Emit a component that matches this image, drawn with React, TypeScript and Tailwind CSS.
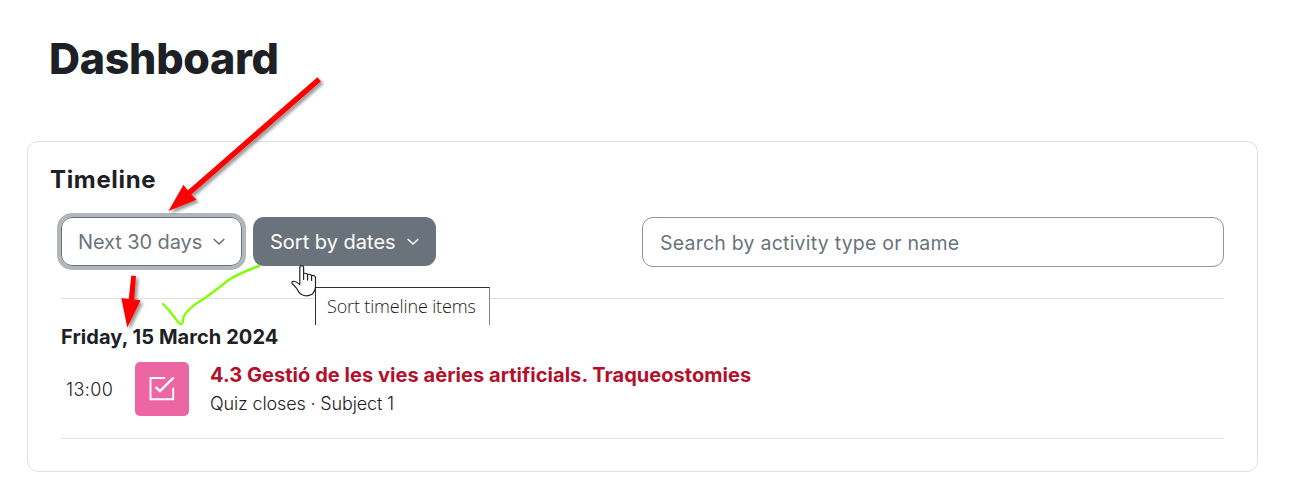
import React from 'react';

const Chevron: React.FC = () => (
  <svg width="12" height="8" viewBox="0 0 12 8" fill="none" stroke="currentColor" strokeWidth="1.7">
    <path d="M1.2 1.500l4.800 4.500 4.800-4.500" strokeLinecap="round" strokeLinejoin="round" />
  </svg>
);

const QuizIcon: React.FC = () => (
  <svg width="26" height="26" viewBox="0 0 26 26" fill="none" stroke="white" strokeWidth="1.9" strokeLinecap="round">
    <path d="M15.500 2H1.500v21.300h22.700V12.500" />
    <path d="M7.200 11.700l3.800 3.500L24 2.200" strokeWidth="2.400" />
  </svg>
);

const Annotations: React.FC = () => (
  <svg className="absolute inset-0 pointer-events-none" width="1313" height="487" viewBox="0 0 1313 487" fill="none">
    <defs>
      <filter id="shadow" x="-20%" y="-20%" width="150%" height="150%">
        <feDropShadow dx="2.5" dy="2.5" stdDeviation="1.7" floodColor="#000" floodOpacity="0.4" />
      </filter>
    </defs>
    <path
      d="M163 304L168 309L179 323.300Q181 325.500 182.700 322.500Q183 316 186 313Q194 304 202 300L212 293L230 279Q240 273 259 266"
      stroke="#80ff00"
      strokeWidth="2.4"
      strokeLinecap="round"
      strokeLinejoin="round"
    />
    <g fill="#ff0000" filter="url(#shadow)">
      <path d="M317.400 77.200L321 81.200 191.300 194.500 196.500 199.800 168.500 211 183.500 184.800 187.700 190.500z" />
      <path d="M131.300 275.500L136 276 134.200 299.500 140.700 300.300 127.300 327.500 121.300 298 128.700 299z" />
    </g>
  </svg>
);

const Cursor: React.FC = () => (
  <svg className="absolute left-[290px] top-[264px]" width="27" height="34" viewBox="0 0 27 34" fill="white" stroke="#22222c" strokeWidth="1.2" strokeLinejoin="round" strokeLinecap="round">
    <path d="M9.800 20.500V3.500a1.900 1.900 0 0 1 3.800 0V9.500q2.500-.8 4 1 2.500-.8 4 1 2.800-.4 3.900 1.700V22q0 5-3.500 8.200-5 3-10.500.3-3-2-4.500-5.500-1.500-2.500-4.500-5-1.500-2 .5-2.700 2.300-.5 6.800 3.200z" />
    <path d="M13.600 9.500v6M17.600 10.500v5.500M21.600 11.500v5" />
  </svg>
);

const App: React.FC = () => {
  return (
    <div className="relative h-[487px] w-[1313px] overflow-hidden bg-white pt-[31px] pl-[27px] font-['Inter',sans-serif] text-[#1d2125]">
      <h1 className="ml-[22px] text-[43px] leading-[54px] font-extrabold tracking-[-0.3px]">Dashboard</h1>

      <section className="mt-[56px] h-[331px] w-[1231px] rounded-[11px] border border-[#dee0e3] pt-[22px] pr-[33px] pl-[33px]">
        <h2 className="-ml-[11px] text-[24px] leading-[32px] font-bold tracking-[0.65px]">Timeline</h2>

        <div className="mt-[21px] flex h-[50px] items-start justify-between">
          <div className="flex gap-[11px] text-[20px] whitespace-nowrap">
            <button className="flex h-[49px] w-[181px] items-center justify-between rounded-[11px] border border-[#6a737b] pr-[16px] pl-[16px] tracking-[-0.1px] text-[#6a737b] shadow-[0_0_0_4px_#b1b6ba]">
              <span>Next 30 days</span>
              <Chevron />
            </button>
            <button className="flex h-[49px] w-[183px] items-center justify-between rounded-[11px] bg-[#6a737b] pr-[17px] pl-[17px] text-white">
              <span>Sort by dates</span>
              <Chevron />
            </button>
          </div>
          <input
            className="h-[50px] w-[582px] rounded-[11px] border border-[#8f959e] pt-[2px] pl-[17px] text-[19.5px] tracking-[0.23px] placeholder:text-[#6a737b]"
            placeholder="Search by activity type or name"
          />
        </div>

        <div className="mt-[31px] h-[141px] border-y border-[#dee0e6] pt-[25px]">
          <h3 className="text-[20px] leading-[26px] font-bold tracking-[0.07px]">Friday, 15 March 2024</h3>
          <div className="mt-[12px] flex whitespace-nowrap">
            <span className="w-[74px] pt-px pl-[5px] text-[18px] leading-[54px] font-light tracking-[0.4px]">13:00</span>
            <div className="flex h-[54px] w-[54px] shrink-0 items-center justify-center rounded-[5px] bg-[#eb66a2]">
              <QuizIcon />
            </div>
            <div className="ml-[21px]">
              <a className="block text-[20px] leading-[26px] font-bold tracking-[0.05px] text-[#b2102b]">
                4.3 Gestió de les vies aèries artificials. Traqueostomies
              </a>
              <p className="mt-[2px] text-[18px] leading-[28px] font-light tracking-[-0.15px]">Quiz closes · Subject 1</p>
            </div>
          </div>
        </div>
      </section>

      <Annotations />
      <div className="absolute top-[287px] left-[315px] h-[38px] w-[175px] border-t border-r border-l border-t-[#303030] border-r-[#858585] border-l-[#303030] bg-white pl-[11px] font-['Open_Sans',sans-serif] text-[18px] leading-[37px] font-light tracking-[-0.15px] whitespace-nowrap text-[#1a1a1a]">
        Sort timeline items
      </div>
      <Cursor />
    </div>
  );
};

export default App;
